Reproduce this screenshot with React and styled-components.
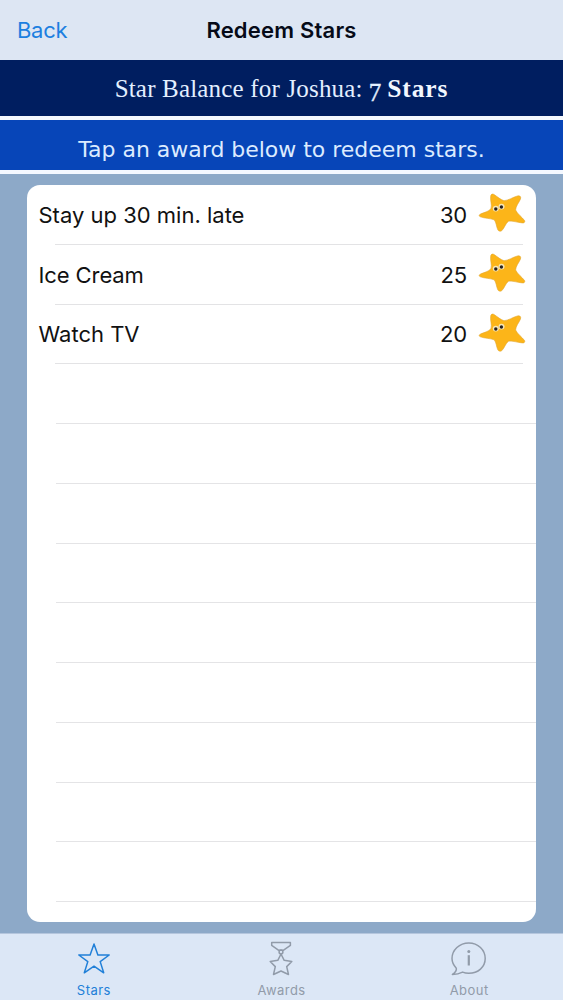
import React from "react";
import styled, { createGlobalStyle } from "styled-components";

const awards = [
  { name: "Stay up 30 min. late", cost: 30, spacing: "0px" },
  { name: "Ice Cream", cost: 25, spacing: "-0.1px" },
  { name: "Watch TV", cost: 20, spacing: "0px" },
];

const emptyRows = Array.from({ length: 9 }, (_, i) => i);

const StarfishIcon = () => (
  <svg width="48" height="40" viewBox="0 0 48 40">
    <path
      d="M12.8 2.6C13.4 0.8 15 0.7 16.5 1.8C19.8 4 22.4 6.6 26 7.7C30.6 7.4 34.8 4.2 39.6 2.9C42.2 2.3 43.3 4 42.4 6.2C40.8 10 37.8 13 37.6 17C39.6 21.2 44 24 46.6 27.6C47.2 29 46.2 30.1 44.4 29.9C39.6 29.6 34.8 27.6 30.4 28.2C27.4 30.8 26.4 35 23.9 37.6C22.5 38.7 20.7 38.4 19.8 36.8C18.2 33.4 18.4 29.4 16.2 26.8C11.8 25.2 6.6 25.4 2.4 23.8C0.7 23.1 0.8 21.8 2.6 21C6.2 19.3 10.6 18.8 13 15.6C14.2 11.4 11.8 6.8 12.8 2.6Z"
      fill="#fcb519"
      stroke="#e3a62e"
      strokeWidth="0.6"
    />
    <ellipse cx="17.8" cy="15.6" rx="3" ry="2.9" fill="#f7e6b6" />
    <ellipse cx="23.5" cy="13.6" rx="3" ry="2.9" fill="#f7e6b6" />
    <circle cx="17.8" cy="16" r="1.7" fill="#28231f" />
    <circle cx="23.4" cy="14" r="1.7" fill="#28231f" />
  </svg>
);

const StarIcon = () => (
  <svg width="36" height="36" viewBox="0 0 36 36">
    <path d="M18 3L21.9 14H33.2L24.2 20.6L27.7 31.8L18 25.2L8.3 31.8L11.8 20.6L2.8 14H14.1Z" />
  </svg>
);

const MedalIcon = () => (
  <svg width="36" height="36" viewBox="0 0 36 36">
    <path d="M8.7 1.4H27.4V4.4L20.6 9.2H15.4L8.7 4.4Z" />
    <circle cx="18" cy="11" r="1.9" />
    <path d="M18 13L21.2 19.3L28.8 20.5L23.7 25.6L25.5 33.5L18 30L10.5 33.5L12.3 25.6L7.2 20.5L14.8 19.3Z" />
  </svg>
);

const InfoIcon = () => (
  <svg width="36" height="36" viewBox="0 0 36 36">
    <path d="M1.4 33.4C4.4 31.6 5.7 29.4 5.3 27.2C2.6 24.4 1 21.2 1 17.6C1 9 8.5 2 17.8 2S34.2 9 34.2 17.6S27.1 32.3 17.8 32.3C15.6 32.3 13.5 31.9 11.6 31.1C8.9 32.5 5.4 33.4 1.4 33.4Z" />
    <path d="M17.8 14.2V24.5" strokeWidth="2.2" />
    <circle cx="17.8" cy="10.6" r="1.5" fill="currentColor" stroke="none" />
  </svg>
);

const App = () => {
  return (
    <Screen>
      <GlobalStyle />
      <NavBar>
        <BackButton>Back</BackButton>
        <Title>Redeem Stars</Title>
      </NavBar>
      <Balance>
        <BalanceLabel>Star Balance for Joshua:</BalanceLabel>
        <BalanceCount>7</BalanceCount>
        <BalanceUnit>Stars</BalanceUnit>
      </Balance>
      <Hint>Tap an award below to redeem stars.</Hint>
      <Content>
        <AwardList>
          {awards.map((award) => (
            <AwardRow key={award.name}>
              <AwardName $spacing={award.spacing}>{award.name}</AwardName>
              <Cost>{award.cost}</Cost>
              <StarfishIcon />
            </AwardRow>
          ))}
          {emptyRows.map((row) => (
            <EmptyRow key={row} />
          ))}
        </AwardList>
      </Content>
      <TabBar>
        <Tab $active>
          <StarIcon />
          <TabLabel>Stars</TabLabel>
        </Tab>
        <Tab>
          <MedalIcon />
          <TabLabel>Awards</TabLabel>
        </Tab>
        <Tab>
          <InfoIcon />
          <TabLabel>About</TabLabel>
        </Tab>
      </TabBar>
    </Screen>
  );
};

const GlobalStyle = createGlobalStyle`
  * {
    box-sizing: border-box;
  }

  body {
    margin: 0;
  }
`;

const Screen = styled.div`
  display: flex;
  flex-direction: column;
  width: 100%;
  height: 1000px;
  overflow: hidden;
  background: #8da9c8;
  font-family: Inter, "Liberation Sans", sans-serif;
`;

const NavBar = styled.header`
  display: grid;
  grid-template-columns: 1fr auto 1fr;
  align-items: center;
  height: 60px;
  padding: 0 17px;
  background: #dde6f3;
`;

const BackButton = styled.button`
  justify-self: start;
  padding: 0;
  border: 0;
  background: none;
  color: #1c7fe0;
  font-family: inherit;
  font-size: 22px;
  line-height: 28px;
  letter-spacing: -0.3px;
`;

const Title = styled.h1`
  margin: 0;
  color: #060b18;
  font-size: 22px;
  font-weight: 600;
  line-height: 28px;
  letter-spacing: 0.2px;
`;

const Balance = styled.div`
  display: flex;
  align-items: baseline;
  justify-content: center;
  height: 60px;
  padding-top: 14px;
  border-bottom: 4px solid #f4f8ff;
  background: #001e60;
  color: #e3efff;
  font-family: Georgia, "Liberation Serif", serif;
  font-size: 25px;
  line-height: 30px;
`;

const BalanceLabel = styled.span`
  letter-spacing: 0.18px;
  white-space: nowrap;
`;

const BalanceCount = styled.span`
  position: relative;
  top: 4px;
  margin: 0 6px;
  -webkit-text-stroke: 0.4px;
`;

const BalanceUnit = styled.span`
  color: #f2f7ff;
  font-size: 25.5px;
  font-weight: 700;
  letter-spacing: 0.9px;
`;

const Hint = styled.div`
  height: 54px;
  padding-top: 15px;
  border-bottom: 4px solid #f4f8ff;
  background: #0745b8;
  color: #dcebff;
  font-family: Verdana, "DejaVu Sans", sans-serif;
  font-size: 22px;
  line-height: 30px;
  letter-spacing: -0.02px;
  text-align: center;
  white-space: nowrap;
`;

const Content = styled.main`
  flex: 1;
  padding: 11px 27px;
`;

const AwardList = styled.div`
  height: 100%;
  overflow: hidden;
  border-radius: 13px;
  background: #fff;
`;

const AwardRow = styled.div`
  display: flex;
  align-items: center;
  height: 59.77px;
  padding: 0 10px 0 11.5px;
  background: linear-gradient(#e3e3e5, #e3e3e5) 28px 100% / 468px 1px no-repeat;
  color: #111;
  font-size: 22px;

  svg {
    margin-left: 11px;
    margin-top: -3px;
  }
`;

const AwardName = styled.span`
  flex: 1;
  letter-spacing: ${(props) => props.$spacing};
`;

const Cost = styled.span`
  letter-spacing: -0.2px;
`;

const EmptyRow = styled.div`
  height: 59.77px;
  margin-left: 29px;
  border-bottom: 1px solid #e4e4e6;
`;

const TabBar = styled.nav`
  display: grid;
  grid-template-columns: repeat(3, 1fr);
  height: 67px;
  border-top: 1px solid #b5c6dd;
  background: #dce7f6;
`;

const Tab = styled.div`
  display: flex;
  flex-direction: column;
  align-items: center;
  padding-top: 7px;
  color: ${(props) => (props.$active ? "#2180d8" : "#919ba9")};

  svg {
    fill: none;
    stroke: currentColor;
    stroke-width: 1.5;
    stroke-linejoin: round;
  }
`;

const TabLabel = styled.span`
  margin-top: 5px;
  font-size: 13px;
  line-height: 16px;
  letter-spacing: 0.45px;
`;

export default App;
